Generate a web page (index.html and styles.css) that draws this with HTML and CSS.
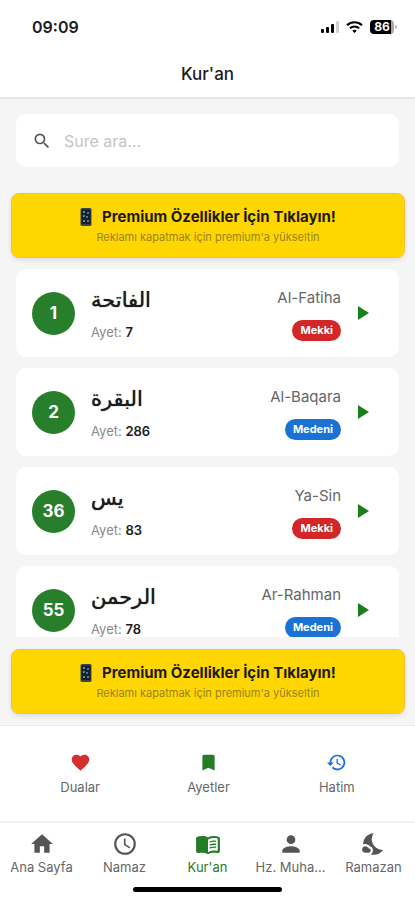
FILE: index.html
```html
<!DOCTYPE html>
<html lang="tr">
<head>
<meta charset="utf-8">
<meta name="viewport" content="width=device-width, initial-scale=1">
<title>Kur'an</title>
<link rel="stylesheet" href="styles.css">
</head>
<body>
<svg class="defs" aria-hidden="true">
  <symbol id="play" viewBox="0 0 24 24"><path d="M8 5v14l11-7z"/></symbol>
  <symbol id="phone" viewBox="0 0 12 18">
    <rect x="0.5" y="0" width="11" height="18" rx="1.5" fill="#3c4450"/>
    <rect x="1.5" y="1.5" width="9" height="14.5" fill="#16202c"/>
    <path d="M3 3h2v2H3zM3 7h2v2H3z" fill="#3f9a68"/>
    <path d="M7 4h2v2H7zM6 8h2v2H6z" fill="#5a63a8"/>
    <path d="M3 12h2v2H3z" fill="#3aa08c"/>
    <path d="M7 12h2v2H7z" fill="#8a6a78"/>
  </symbol>
</svg>

<div class="status">
  <span class="time">09:09</span>
  <div class="status-icons">
    <svg width="18" height="12" viewBox="0 0 18 12" aria-hidden="true">
      <rect x="0" y="8" width="3" height="4" rx="1"/>
      <rect x="5" y="6" width="3" height="6" rx="1"/>
      <rect x="10" y="3" width="3" height="9" rx="1"/>
      <rect x="15" y="0" width="3" height="12" rx="1" fill="#d2d2d2"/>
    </svg>
    <svg width="17" height="12" viewBox="0 0 17 12" fill="none" stroke="#000" stroke-width="2" aria-hidden="true">
      <path d="M1 4.3a10.8 10.8 0 0 1 15 0"/>
      <path d="M3.9 7.3a6.6 6.6 0 0 1 9.2 0"/>
      <path d="M8.5 12 6.3 9.7a3.2 3.2 0 0 1 4.4 0z" fill="#000" stroke="none"/>
    </svg>
    <div class="battery"><span class="level">86</span></div>
  </div>
</div>

<header class="header"><h1>Kur'an</h1></header>

<main class="main">
  <label class="search">
    <svg width="20" height="20" viewBox="0 0 24 24" fill="#555" aria-hidden="true"><path d="M15.5 14h-.79l-.28-.27A6.47 6.47 0 0 0 16 9.5 6.5 6.5 0 1 0 9.5 16c1.61 0 3.09-.59 4.23-1.57l.27.28v.79l5 4.99L20.49 19zm-6 0C7.01 14 5 11.99 5 9.5S7.01 5 9.5 5 14 7.01 14 9.5 11.99 14 9.5 14z"/></svg>
    <input type="search" placeholder="Sure ara..." aria-label="Sure ara">
  </label>

  <button class="banner" type="button">
    <span class="banner-title"><svg width="12" height="18" aria-hidden="true"><use href="#phone"/></svg>Premium Özellikler İçin Tıklayın!</span>
    <span class="banner-sub">Reklamı kapatmak için premium'a yükseltin</span>
  </button>

  <ul class="list">
    <li class="card">
      <span class="number">1</span>
      <div class="sura"><span class="arabic" lang="ar">الفاتحة</span><span class="verses">Ayet: <b>7</b></span></div>
      <div class="meta"><span class="name">Al-Fatiha</span><span class="tag mekki">Mekki</span></div>
      <button class="play" type="button" aria-label="Al-Fatiha"><svg width="24" height="24"><use href="#play"/></svg></button>
    </li>
    <li class="card">
      <span class="number">2</span>
      <div class="sura"><span class="arabic" lang="ar">البقرة</span><span class="verses">Ayet: <b>286</b></span></div>
      <div class="meta"><span class="name">Al-Baqara</span><span class="tag medeni">Medeni</span></div>
      <button class="play" type="button" aria-label="Al-Baqara"><svg width="24" height="24"><use href="#play"/></svg></button>
    </li>
    <li class="card">
      <span class="number">36</span>
      <div class="sura"><span class="arabic" lang="ar">يس</span><span class="verses">Ayet: <b>83</b></span></div>
      <div class="meta"><span class="name">Ya-Sin</span><span class="tag mekki">Mekki</span></div>
      <button class="play" type="button" aria-label="Ya-Sin"><svg width="24" height="24"><use href="#play"/></svg></button>
    </li>
    <li class="card">
      <span class="number">55</span>
      <div class="sura"><span class="arabic" lang="ar">الرحمن</span><span class="verses">Ayet: <b>78</b></span></div>
      <div class="meta"><span class="name">Ar-Rahman</span><span class="tag medeni">Medeni</span></div>
      <button class="play" type="button" aria-label="Ar-Rahman"><svg width="24" height="24"><use href="#play"/></svg></button>
    </li>
  </ul>

  <button class="banner bottom" type="button">
    <span class="banner-title"><svg width="12" height="18" aria-hidden="true"><use href="#phone"/></svg>Premium Özellikler İçin Tıklayın!</span>
    <span class="banner-sub">Reklamı kapatmak için premium'a yükseltin</span>
  </button>
</main>

<div class="quick">
  <a href="#dualar"><svg width="21" height="21" viewBox="0 0 24 24" fill="#d32f2f" aria-hidden="true"><path d="m12 21.35-1.45-1.32C5.4 15.36 2 12.28 2 8.5 2 5.42 4.42 3 7.5 3c1.74 0 3.41.81 4.5 2.09C13.09 3.81 14.76 3 16.5 3 19.58 3 22 5.42 22 8.5c0 3.78-3.4 6.86-8.55 11.54z"/></svg>Dualar</a>
  <a href="#ayetler"><svg width="21" height="21" viewBox="0 0 24 24" fill="#237d27" aria-hidden="true"><path d="M17 3H7c-1.1 0-2 .9-2 2v16l7-3 7 3V5c0-1.1-.9-2-2-2z"/></svg>Ayetler</a>
  <a href="#hatim"><svg width="21" height="21" viewBox="0 0 24 24" fill="#1f6fd6" aria-hidden="true"><path d="M13 3a9 9 0 0 0-9 9H1l3.89 3.89.07.14L9 12H6a7 7 0 1 1 2.06 4.94l-1.42 1.42A9 9 0 1 0 13 3zm-1 5v5l4.28 2.54.72-1.21-3.5-2.08V8z"/></svg>Hatim</a>
</div>

<nav class="tabs">
  <a href="#ana"><svg width="26" height="26" viewBox="0 0 24 24" aria-hidden="true"><path d="M10 20v-6h4v6h5v-8h3L12 3 2 12h3v8z"/></svg><span>Ana Sayfa</span></a>
  <a href="#namaz"><svg width="26" height="26" viewBox="0 0 24 24" aria-hidden="true"><path d="M11.99 2a10 10 0 1 0 .02 20 10 10 0 0 0-.02-20zM12 20a8 8 0 1 1 0-16 8 8 0 0 1 0 16zm.5-13H11v6l5.25 3.15.75-1.23-4.5-2.67z"/></svg><span>Namaz</span></a>
  <a href="#kuran" class="active" aria-current="page"><svg width="26" height="26" viewBox="0 0 24 24" aria-hidden="true"><path d="M17.5 4.5c-1.95 0-4.05.4-5.5 1.5-1.45-1.1-3.55-1.5-5.5-1.5-1.45 0-2.99.22-4.28.79C1.49 5.62 1 6.33 1 7.14v11.28c0 1.3 1.22 2.26 2.48 1.94.98-.25 2.02-.36 3.02-.36 1.56 0 3.22.26 4.56.92.6.3 1.28.3 1.87 0 1.34-.67 3-.92 4.56-.92 1 0 2.04.11 3.02.36 1.26.33 2.48-.63 2.48-1.94V7.14c0-.81-.49-1.52-1.22-1.85-1.28-.57-2.82-.79-4.27-.79zM21 17.23c0 .63-.58 1.09-1.2.98-.75-.14-1.53-.2-2.3-.2-1.7 0-4.15.65-5.5 1.5V8c1.35-.85 3.8-1.5 5.5-1.5.92 0 1.83.09 2.7.28.46.1.8.51.8.98z"/><path d="M13.5 9.6c1.5-.8 3.8-1.1 6-.7v1.3c-2-.4-4.2-.1-6 .7zm0 2.8c1.5-.8 3.8-1.1 6-.7V13c-2-.4-4.2-.1-6 .7zm0 2.7c1.5-.8 3.8-1.1 6-.7v1.3c-2-.4-4.2-.1-6 .7z"/></svg><span>Kur'an</span></a>
  <a href="#muhammed"><svg width="26" height="26" viewBox="0 0 24 24" aria-hidden="true"><path d="M12 12a4 4 0 1 0 0-8 4 4 0 0 0 0 8zm0 2c-2.67 0-8 1.34-8 4v2h16v-2c0-2.66-5.33-4-8-4z"/></svg><span>Hz. Muha...</span></a>
  <a href="#ramazan"><svg width="26" height="26" viewBox="0 0 24 24" aria-hidden="true"><path d="M11.1 12.08c-2.33-4.51-.5-8.48.53-10.07C6.27 2.2 1.98 6.59 1.98 12c0 .14.02.28.02.42.62-.27 1.29-.42 2-.42 1.66 0 3.18.83 4.1 2.15A4.01 4.01 0 0 1 11 18c0 1.52-.87 2.83-2.12 3.51.98.32 2.03.5 3.11.5 3.5 0 6.58-1.8 8.37-4.52-2.36.23-6.98-.97-9.26-5.41zM7 16h-.18C6.4 14.84 5.3 14 4 14c-1.66 0-3 1.34-3 3s1.34 3 3 3h3c1.1 0 2-.9 2-2s-.9-2-2-2z"/></svg><span>Ramazan</span></a>
</nav>
<div class="home"></div>
</body>
</html>
```
FILE: styles.css
```css
* { box-sizing: border-box; }

body {
  margin: 0;
  height: 100vh;
  display: flex;
  flex-direction: column;
  background: #fff;
  color: #1c1c1c;
  font-family: Inter, "Noto Sans", "DejaVu Sans", sans-serif;
  overflow: hidden;
}

.defs { display: none; }

button { font: inherit; border: 0; cursor: pointer; }
a { text-decoration: none; }

.status {
  flex: none;
  display: flex;
  justify-content: space-between;
  align-items: center;
  height: 54px;
  padding: 0 18px 0 32px;
}

.time { font-size: 16px; font-weight: 600; }

.status-icons { display: flex; align-items: center; gap: 7px; }

.battery {
  position: relative;
  width: 24px;
  height: 14px;
  margin-right: 3px;
  border-radius: 4px;
  background: linear-gradient(90deg, #000 86%, #a8a8a8 86%);
  color: #fff;
  font-size: 12px;
  font-weight: 700;
  line-height: 14px;
  text-align: center;
}

.battery::after {
  content: "";
  position: absolute;
  left: 25px;
  top: 5px;
  width: 2px;
  height: 4px;
  border-radius: 0 2px 2px 0;
  background: #b4b4b4;
}

.header {
  flex: none;
  height: 45px;
  border-bottom: 2px solid #e6e6e6;
  text-align: center;
}

.header h1 { margin: 0; font-size: 17px; font-weight: 500; line-height: 40px; }

.main {
  flex: 1;
  min-height: 0;
  display: flex;
  flex-direction: column;
  background: #f5f5f5;
}

.search {
  flex: none;
  display: flex;
  align-items: center;
  gap: 12px;
  height: 53px;
  margin: 15px 16px 26px;
  padding: 0 16px;
  border-radius: 10px;
  background: #fff;
}

.search input {
  flex: 1;
  min-width: 0;
  padding: 0;
  border: 0;
  outline: 0;
  background: none;
  font: inherit;
  font-size: 16px;
}

.search input::placeholder { color: #c4c4c4; opacity: 1; }

.banner {
  flex: none;
  display: flex;
  flex-direction: column;
  align-items: center;
  justify-content: center;
  gap: 2px;
  height: 65px;
  margin: 0 10px 0 11px;
  padding: 0;
  border: 1px solid #fbc02d;
  border-radius: 8px;
  background: #ffd600;
  box-shadow: 0 2px 5px rgba(0, 0, 0, 0.1);
}

.banner-title {
  display: flex;
  align-items: center;
  gap: 10px;
  color: #1c1a08;
  font-size: 15px;
  font-weight: 700;
  line-height: 20px;
}

.banner-sub { color: #9a8420; font-size: 11px; line-height: 16px; }

.list {
  flex: 1;
  min-height: 0;
  margin: 11px 0 12px;
  padding: 0 16px;
  overflow: hidden;
  list-style: none;
}

.card {
  display: flex;
  align-items: center;
  height: 88px;
  margin-bottom: 11px;
  padding: 0 16px;
  border-radius: 10px;
  background: #fff;
}

.number {
  width: 43px;
  height: 43px;
  border-radius: 50%;
  background: #277f2b;
  color: #fff;
  font-size: 17px;
  font-weight: 700;
  line-height: 43px;
  text-align: center;
}

.sura {
  flex: 1;
  display: flex;
  flex-direction: column;
  align-items: flex-start;
  gap: 10px;
  margin-left: 16px;
}

.arabic {
  font-family: "DejaVu Sans", sans-serif;
  font-size: 21px;
  line-height: 28px;
  text-shadow: 0 0 1px currentColor;
}

.verses { color: #8a8a8a; font-size: 13px; line-height: 16px; }
.verses b { color: #1c1c1c; font-weight: 600; }

.meta {
  display: flex;
  flex-direction: column;
  align-items: flex-end;
  gap: 12px;
  padding-top: 2px;
}

.name { color: #666; font-size: 15px; line-height: 20px; }

.tag {
  padding: 0 8px;
  border-radius: 11px;
  color: #fff;
  font-size: 11px;
  font-weight: 700;
  line-height: 21px;
}

.mekki { background: #d32626; }
.medeni { background: #1a73d4; }

.play {
  display: grid;
  place-items: center;
  width: 42px;
  height: 42px;
  padding: 0;
  background: none;
  fill: #16801b;
}

.bottom { margin-bottom: 11px; }

.quick {
  flex: none;
  display: flex;
  height: 96px;
  padding: 0 14px 0 16px;
  border-top: 1px solid #ececec;
}

.quick a {
  flex: 1;
  display: flex;
  flex-direction: column;
  align-items: center;
  justify-content: center;
  gap: 6px;
  color: #666;
  font-size: 13px;
  line-height: 16px;
}

.tabs {
  flex: none;
  display: flex;
  height: 66px;
  padding-top: 8px;
  border-top: 2px solid #f0f0f0;
}

.tabs a {
  flex: 1;
  display: flex;
  flex-direction: column;
  align-items: center;
  gap: 2px;
  color: #666;
  fill: #555;
  font-size: 13px;
  line-height: 16px;
  white-space: nowrap;
}

.tabs .active { color: #237d27; fill: #237d27; }

.home {
  flex: none;
  width: 36%;
  height: 5px;
  margin: 0 auto 8px;
  border-radius: 3px;
  background: #000;
}
```
